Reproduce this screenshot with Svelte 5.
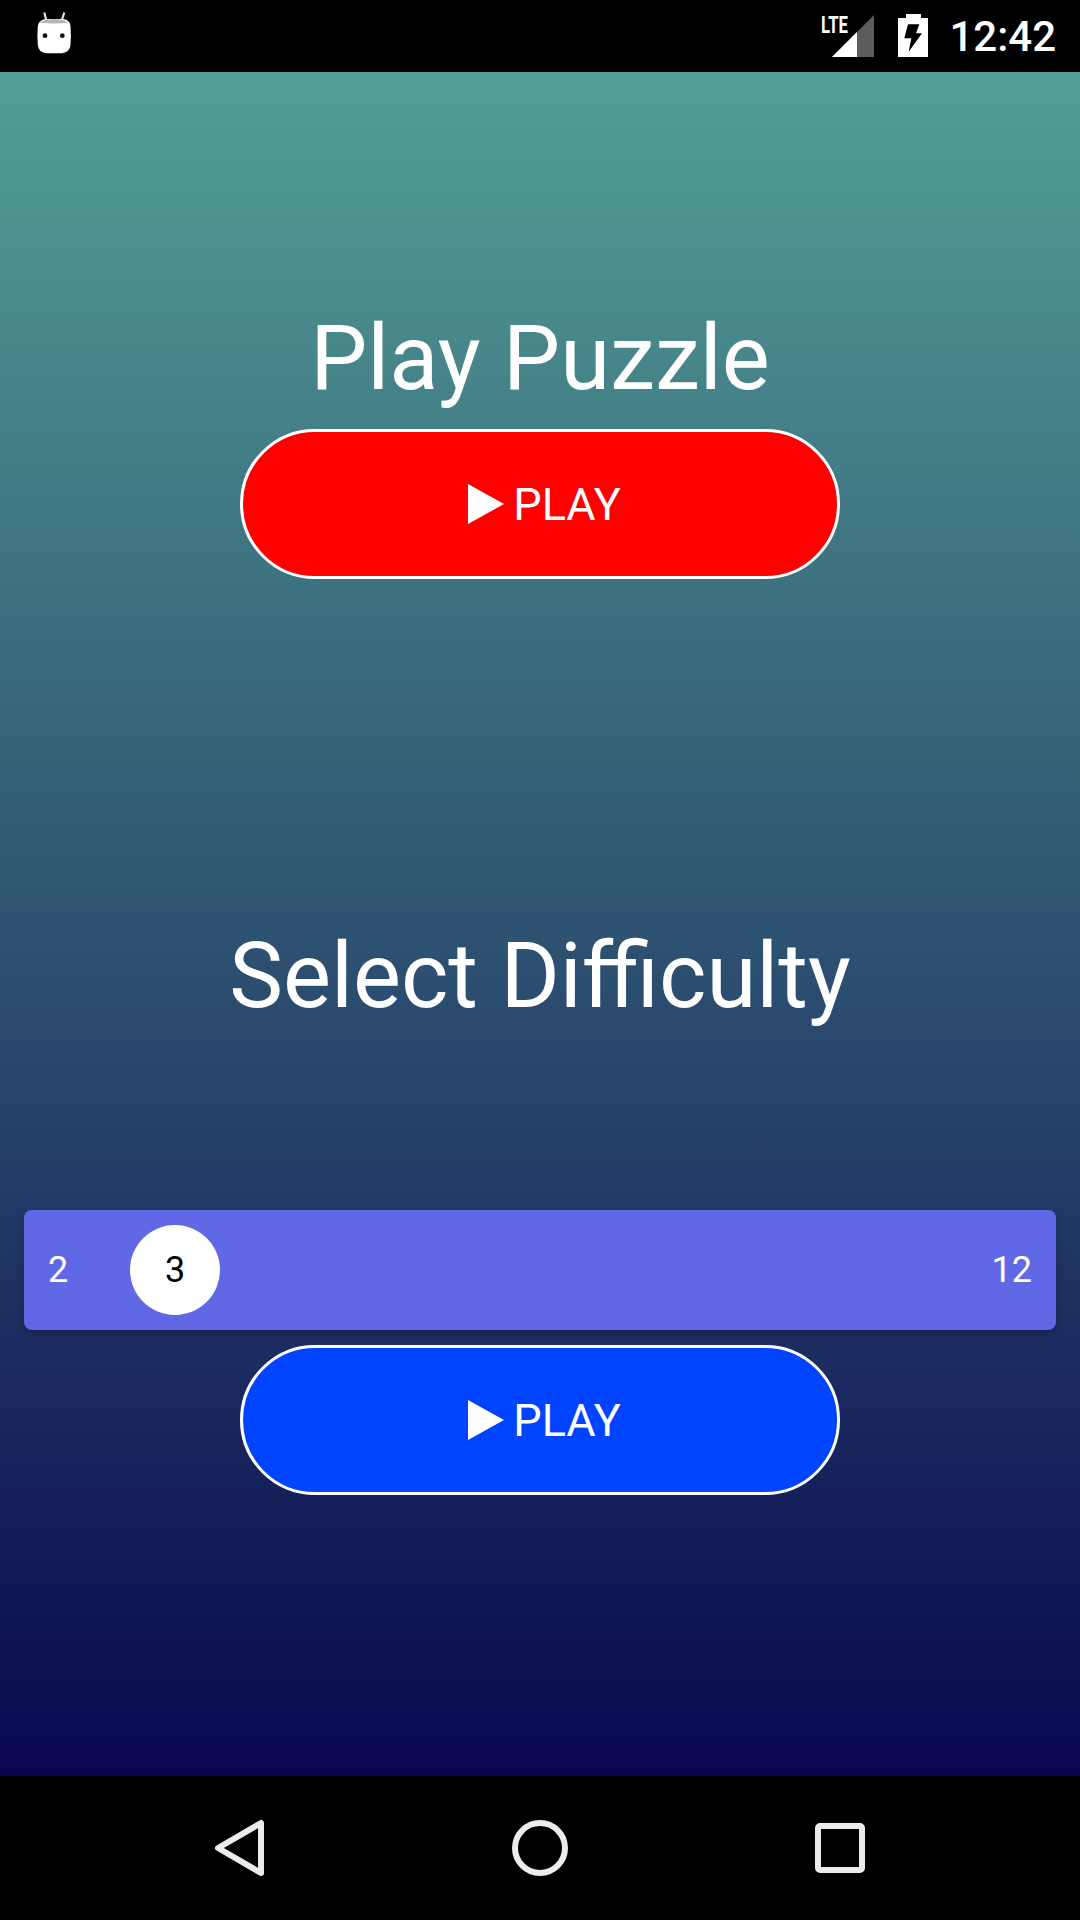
<script>
  const sections = { min: 2, max: 12, value: 3 };
</script>

<div class="screen">
  <header class="status-bar">
    <svg class="app-icon" viewBox="0 0 36 42" width="36" height="42">
      <path d="M8.300 0.500 L10.300 8.500 M28.300 0.500 L25.700 8.500" stroke="#e4e4e4" stroke-width="2.200" fill="none"/>
      <path d="M10 7 H27 Q34.300 8 34.500 14 Q35.300 24 34.500 33 Q34 40 26 41.300 H10.500 Q2.500 40.500 1.800 33 Q1 24 1.800 14 Q2.500 8 10 7 Z" fill="#fff"/>
      <path d="M3.500 10.500 Q7 7.500 18 7 Q29 7.500 32.500 10.500 Q18 12.500 3.500 10.500 Z" fill="#b5b5b5"/>
      <circle cx="9" cy="23.700" r="2.400" fill="#111"/>
      <circle cx="26.300" cy="23.700" r="2.400" fill="#111"/>
    </svg>
    <div class="status-right">
      <svg class="signal" viewBox="0 -8 54 60" width="54" height="60">
        <text x="0" y="19" class="lte" textLength="27" lengthAdjust="spacingAndGlyphs">LTE</text>
        <polygon points="53,1 53,43 11,43" fill="#5c5c5c"/>
        <polygon points="36,18 36,43 11,43" fill="#fff"/>
      </svg>
      <svg class="battery" viewBox="0 0 30 43" width="30" height="43">
        <path fill-rule="evenodd" fill="#fff" d="M8 0 H23 V4 H30 V43 H0 V4 H8 Z M10 10.300 H21.300 L18 19.300 H24 L10.700 37.700 L13.300 24.300 H6.300 Z"/>
      </svg>
      <span class="clock">12:42</span>
    </div>
  </header>

  <main class="content">
    <h1 class="title">Play Puzzle</h1>
    <button class="play red">
      <svg viewBox="0 0 36 40" width="36" height="40"><polygon points="0,0 36,20 0,40" fill="#fff"/></svg>
      <span>PLAY</span>
    </button>

    <h1 class="title second">Select Difficulty</h1>
    <div class="seek">
      <span class="limit">{sections.min}</span>
      <div class="track">
        <div class="thumb">{sections.value}</div>
      </div>
      <span class="limit">{sections.max}</span>
    </div>
    <button class="play blue">
      <svg viewBox="0 0 36 40" width="36" height="40"><polygon points="0,0 36,20 0,40" fill="#fff"/></svg>
      <span>PLAY</span>
    </button>
  </main>

  <nav class="nav-bar">
    <svg viewBox="0 0 52 58" width="52" height="58">
      <path d="M47 4 V54 L4 29 Z" class="nav-stroke"/>
    </svg>
    <svg viewBox="0 0 56 56" width="56" height="56">
      <circle cx="28" cy="28" r="25" class="nav-stroke"/>
    </svg>
    <svg viewBox="0 0 50 50" width="50" height="50">
      <rect x="3" y="3" width="44" height="44" rx="2" class="nav-stroke"/>
    </svg>
  </nav>
</div>

<style>
  :global(body) {
    margin: 0;
    background: #000;
  }

  .screen {
    width: 1080px;
    height: 1920px;
    display: flex;
    flex-direction: column;
    font-family: Roboto, sans-serif;
    color: #fff;
    overflow: hidden;
  }

  .status-bar {
    height: 72px;
    flex: none;
    background: #000;
    display: flex;
    align-items: center;
    justify-content: space-between;
    padding: 0 24px 0 36px;
    box-sizing: border-box;
  }

  .app-icon {
    margin-top: -6px;
  }

  .status-right {
    display: flex;
    align-items: center;
  }

  .signal {
    margin-right: 23px;
  }

  .lte {
    font-family: Roboto, sans-serif;
    font-weight: 700;
    font-size: 24px;
    fill: #fff;
  }

  .battery {
    margin-right: 21px;
    margin-top: -1px;
  }

  .clock {
    font-size: 42px;
    font-weight: 500;
  }

  .content {
    flex: 1;
    display: flex;
    flex-direction: column;
    align-items: center;
    padding-top: 233px;
    background: linear-gradient(180deg, #539f95 0%, #09074f 100%);
  }

  .title {
    margin: 0;
    font-size: 90.5px;
    font-weight: 400;
    line-height: 106px;
    text-align: center;
  }

  .second {
    margin-top: 344px;
  }

  .play {
    width: 600px;
    height: 150px;
    margin-top: 18px;
    box-sizing: border-box;
    border: 3px solid #fff;
    border-radius: 75px;
    display: flex;
    align-items: center;
    justify-content: center;
    gap: 9px;
    color: #fff;
    font-family: inherit;
    font-size: 45px;
    padding: 0 0 0 9px;
  }

  .red {
    background: #ff0000;
  }

  .blue {
    background: #0044ff;
  }

  .seek {
    width: 1032px;
    height: 120px;
    margin-top: 181px;
    box-sizing: border-box;
    padding: 0 24px;
    background: #6068e6;
    border-radius: 8px;
    box-shadow: 0 4px 8px rgba(0, 0, 0, 0.25);
    display: flex;
    align-items: center;
    font-size: 36px;
  }

  .seek + .play {
    margin-top: 15px;
  }

  .track {
    flex: 1;
    display: flex;
    padding-left: 62px;
  }

  .thumb {
    width: 90px;
    height: 90px;
    border-radius: 50%;
    background: #fff;
    color: #000;
    display: flex;
    align-items: center;
    justify-content: center;
  }

  .nav-bar {
    height: 144px;
    flex: none;
    background: #000;
    display: flex;
    align-items: center;
    justify-content: center;
    padding-right: 2px;
  }

  .nav-bar svg:nth-child(1) {
    margin-right: 246px;
  }

  .nav-bar svg:nth-child(3) {
    margin-left: 247px;
  }

  .nav-stroke {
    fill: none;
    stroke: #ececec;
    stroke-width: 6;
    stroke-linejoin: round;
  }
</style>
